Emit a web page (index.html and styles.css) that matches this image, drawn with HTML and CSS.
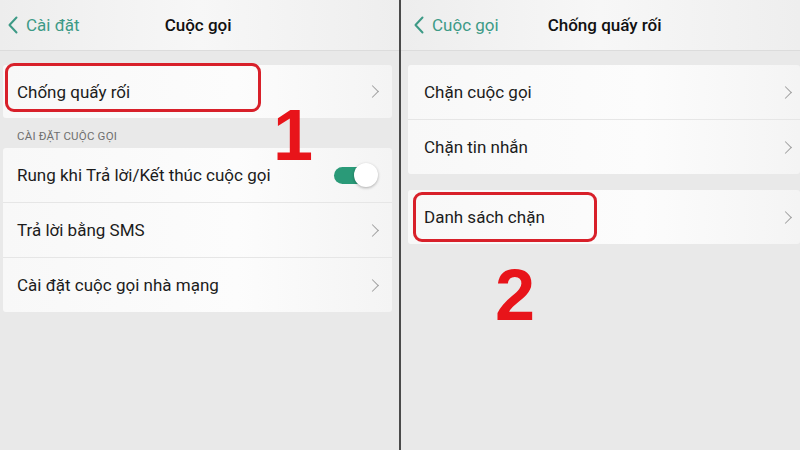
FILE: index.html
```html
<!DOCTYPE html>
<html lang="vi">
  <head>
    <meta charset="UTF-8" />
    <meta name="viewport" content="width=device-width, initial-scale=1.0" />
    <title>Cuộc gọi - Chống quấy rối</title>
    <link rel="stylesheet" href="styles.css">
  </head>
  <body>
    <div class="screens">
      <!-- Screen 1: Cuộc gọi -->
      <div class="screen screen-left">
        <div class="header">
          <div class="back">
            <svg class="back-icon" width="10" height="18" viewBox="0 0 10 18">
              <path d="M8.5 1.5 L1.5 9 L8.5 16.5" fill="none" stroke="#3d9a86" stroke-width="2" stroke-linecap="round" stroke-linejoin="round"/>
            </svg>
            <span>Cài đặt</span>
          </div>
          <div class="header-title">Cuộc gọi</div>
        </div>

        <div class="content">
          <div class="card first">
            <div class="row">
              <span>Chống quấy rối</span>
              <span class="chevron"></span>
            </div>
          </div>

          <div class="section-label">CÀI ĐẶT CUỘC GỌI</div>

          <div class="card">
            <div class="row">
              <span>Rung khi Trả lời/Kết thúc cuộc gọi</span>
              <span class="toggle"><span class="knob"></span></span>
            </div>
            <div class="row">
              <span>Trả lời bằng SMS</span>
              <span class="chevron"></span>
            </div>
            <div class="row">
              <span>Cài đặt cuộc gọi nhà mạng</span>
              <span class="chevron"></span>
            </div>
          </div>
        </div>

        <div class="mark mark-1"></div>
        <div class="step step-1">1</div>
      </div>

      <div class="split"></div>

      <!-- Screen 2: Chống quấy rối -->
      <div class="screen screen-right">
        <div class="header">
          <div class="back">
            <svg class="back-icon" width="10" height="18" viewBox="0 0 10 18">
              <path d="M8.5 1.5 L1.5 9 L8.5 16.5" fill="none" stroke="#3d9a86" stroke-width="2" stroke-linecap="round" stroke-linejoin="round"/>
            </svg>
            <span>Cuộc gọi</span>
          </div>
          <div class="header-title">Chống quấy rối</div>
        </div>

        <div class="content">
          <div class="card first">
            <div class="row">
              <span>Chặn cuộc gọi</span>
              <span class="chevron"></span>
            </div>
            <div class="row">
              <span>Chặn tin nhắn</span>
              <span class="chevron"></span>
            </div>
          </div>

          <div class="card second">
            <div class="row">
              <span>Danh sách chặn</span>
              <span class="chevron"></span>
            </div>
          </div>
        </div>

        <div class="mark mark-2"></div>
        <div class="step step-2">2</div>
      </div>
    </div>
  </body>
</html>
```

FILE: styles.css
```css
body {
  margin: 0;
  font-family: Roboto, "Noto Sans", Arial, sans-serif;
  color: #1c1c1c;
  background-color: #e9e9e9;
}
.screens {
  display: flex;
  width: 800px;
  height: 450px;
  overflow: hidden;
}
.screen {
  position: relative;
  width: 399px;
  background-color: #e9e9e9;
}
.split {
  width: 2px;
  background-color: #4a4a4a;
}
.header {
  position: relative;
  height: 50px;
  display: flex;
  align-items: center;
  background: linear-gradient(90deg, #ededed 0%, #f7f7f7 50%, #eeeeee 100%);
  border-bottom: 1px solid #dcdcdc;
}
.back {
  display: flex;
  align-items: center;
  gap: 8px;
  color: #3d9a86;
  font-size: 17px;
}
.screen-left .back {
  padding-left: 8px;
}
.screen-right .back {
  padding-left: 13px;
}
.header-title {
  font-size: 17px;
  font-weight: 500;
  color: #111;
}
.screen-left .header-title {
  margin-left: 85px;
}
.screen-right .header-title {
  margin-left: 49px;
}
.content {
  display: flex;
  flex-direction: column;
}
.screen-left .content {
  padding: 14px 7px 0 3px;
}
.screen-right .content {
  padding: 14px 0 0 7px;
}
.card {
  background: linear-gradient(90deg, #f8f8f8 0%, #fcfcfc 60%, #f4f4f4 100%);
  border-radius: 3px;
}
.card.second {
  margin-top: 16px;
}
.row {
  height: 54px;
  display: flex;
  align-items: center;
  justify-content: space-between;
  padding: 0 15px 0 14px;
  font-size: 17px;
  border-top: 1px solid #e6e6e6;
}
.row:first-child {
  border-top: none;
}
.screen-left .card.first .row {
  height: 53px;
}
.screen-right .row {
  padding-left: 16px;
  padding-right: 10px;
}
.section-label {
  font-size: 11.5px;
  color: #6f6f6f;
  padding: 11px 0 5px 14px;
  letter-spacing: 0.2px;
}
.chevron {
  width: 8px;
  height: 8px;
  border-top: 1px solid #a0a0a0;
  border-right: 1px solid #a0a0a0;
  transform: rotate(45deg);
}
.toggle {
  position: relative;
  width: 36px;
  height: 17px;
  border-radius: 9px;
  background-color: #2a9a78;
  margin-right: 7px;
}
.knob {
  position: absolute;
  right: -8px;
  top: -4px;
  width: 24px;
  height: 24px;
  border-radius: 50%;
  background-color: #ffffff;
  box-shadow: 0 1px 3px rgba(0, 0, 0, 0.3);
}
.mark {
  position: absolute;
  border: 3.5px solid #d8202a;
  border-radius: 9px;
}
.mark-1 {
  left: 5px;
  top: 63px;
  width: 250px;
  height: 43px;
}
.mark-2 {
  left: 12px;
  top: 192px;
  width: 178px;
  height: 44px;
}
.step {
  position: absolute;
  font-family: "Liberation Sans", Arial, sans-serif;
  font-weight: bold;
  color: #e8141a;
  font-size: 72px;
  line-height: 72px;
}
.step-1 {
  left: 273px;
  top: 99px;
}
.step-2 {
  left: 94px;
  top: 259px;
}
```
